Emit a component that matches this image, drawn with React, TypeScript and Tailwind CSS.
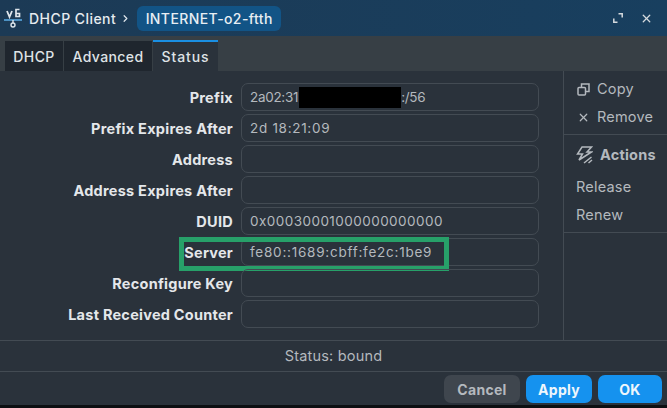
import React from 'react';
import { X, ChevronRight } from 'lucide-react';

const rows = [
  { label: 'Prefix', value: '2a02:31', redacted: true, spacing: 'tracking-[-0.3px]' },
  { label: 'Prefix Expires After', value: '2d 18:21:09', spacing: 'tracking-[0.7px]' },
  { label: 'Address', value: '', spacing: '' },
  { label: 'Address Expires After', value: '', spacing: '' },
  { label: 'DUID', value: '0x00030001000000000000', spacing: 'tracking-[0.45px]' },
  { label: 'Server', value: 'fe80::1689:cbff:fe2c:1be9', highlight: true, spacing: 'tracking-[0.76px]' },
  { label: 'Reconfigure Key', value: '', spacing: '' },
  { label: 'Last Received Counter', value: '', spacing: '' },
];

const tabs = [
  { name: 'DHCP', width: 'w-[58px]' },
  { name: 'Advanced', width: 'w-[88px]' },
  { name: 'Status', width: 'w-[65px]' },
];

const Row = ({ label, value, redacted, highlight, spacing }: { label: string; value: string; redacted?: boolean; highlight?: boolean; spacing: string }) => (
  <div className="flex items-center h-[28px] relative">
    <div className="w-[233px] pt-[1px] text-right text-[14.5px] tracking-[0.25px] font-bold text-[#e4e7ea] whitespace-nowrap">{label}</div>
    <div className={`ml-[8px] w-[298px] h-[28px] pt-[1px] border border-[#434b53] rounded-[7px] pl-[8px] flex items-center text-[13.5px] text-[#b4b9be] whitespace-nowrap ${spacing}`}>
      {value}
      {redacted && (
        <>
          <span className="bg-black w-[102px] h-[21px] ml-[1px]"></span>
          <span>:/56</span>
        </>
      )}
    </div>
    {highlight && (
      <div className="absolute left-[179px] top-[-1px] w-[270px] h-[34px] border-[5px] border-[#27a069]"></div>
    )}
  </div>
);

export default function App() {
  return (
    <div className="w-[667px] h-[408px] flex flex-col bg-[#2a323b] overflow-hidden font-['Inter','Noto_Sans',sans-serif]">
      {/* Title bar */}
      <div className="h-[36px] shrink-0 flex items-center bg-gradient-to-r from-[#1c3a55] to-[#183f5f] pl-[4px] pr-[14px]">
        <svg width="19" height="24" viewBox="0 0 19 24" className="text-[#dfe6ec]" fill="none" stroke="currentColor">
          <path d="M3 5l2.500 6L8 5" strokeWidth="1.8" />
          <path d="M15.500 3.500h-3.500v7h3.500v-3h-3.500" strokeWidth="1.700" />
          <path d="M0 14h18" strokeWidth="1.600" stroke="#5aa7e0" />
          <path d="M9 14v3" strokeWidth="1.400" />
          <circle cx="9" cy="19" r="2" strokeWidth="1.400" />
        </svg>
        <span className="ml-[6px] text-[14px] font-medium tracking-[0.45px] text-[#e6ebef] whitespace-nowrap">DHCP Client</span>
        <ChevronRight size={11} strokeWidth={2.6} className="ml-[4px] text-[#dfe6ec]" />
        <span className="ml-[6px] h-[25px] w-[144px] flex items-center justify-center rounded-[6px] bg-[#125486] text-[14px] font-medium text-[#e8eef3] whitespace-nowrap tracking-[0.4px]">
          INTERNET-o2-ftth
        </span>
        <div className="ml-auto flex items-center gap-[17px] text-[#d5dade]">
          <svg width="10" height="10" viewBox="0 0 10 10" fill="none" stroke="currentColor" strokeWidth="1.5">
            <path d="M5.500.8h3.700v3.700M.8 5.500v3.700h3.700" />
          </svg>
          <X size={13} strokeWidth={2.4} />
        </div>
      </div>

      {/* Tabs */}
      <div className="h-[35px] shrink-0 flex items-end gap-[1px] bg-[#373f45] pl-[5px]">
        {tabs.map((t) => (
          <div
            key={t.name}
            className={
              t.name === 'Status'
                ? `${t.width} h-[31px] flex items-center justify-center border-t-2 border-[#1a8fe3] bg-[#2a323b] text-[14px] tracking-[0.9px] font-medium text-[#dfe3e6]`
                : `${t.width} h-[30px] flex items-center justify-center bg-[#1f262e] text-[14px] tracking-[0.4px] font-medium text-[#dfe3e6]`
            }
          >
            {t.name}
          </div>
        ))}
      </div>

      {/* Body */}
      <div className="h-[270px] shrink-0 flex border-b border-[#434b53]">
        <div className="w-[563px] pt-[12px] flex flex-col gap-[3px]">
          {rows.map((r) => (
            <Row key={r.label} {...r} />
          ))}
        </div>
        <div className="w-[104px] border-l border-[#434b53] text-[14.5px] tracking-[0.2px] text-[#b4b9be]">
          <div className="h-[64px] border-b border-[#434b53] pl-[13px] pt-[4px] flex flex-col">
            <div className="h-[28px] flex items-center gap-[7px]">
              <svg width="13" height="13" viewBox="0 0 13 13" fill="none" stroke="currentColor" strokeWidth="1.5">
                <rect x="1" y="4.500" width="7.500" height="7.500" rx="1" />
                <path d="M4.500 4.500V1h7.500v7.500H8.500" />
              </svg>
              Copy
            </div>
            <div className="h-[28px] flex items-center gap-[7px]">
              <X size={13} strokeWidth={2.2} />
              Remove
            </div>
          </div>
          <div className="h-[98px] border-b border-[#434b53] pl-[12px] flex flex-col">
            <div className="h-[40px] flex items-center gap-[7px] font-bold text-[#b4b9be]">
              <svg width="17" height="19" viewBox="0 0 17 19" fill="none" stroke="currentColor" strokeWidth="1.5">
                <path d="M6 1h9.500l-4.500 5h4.500L3 14l3.500-6H1.500z" />
                <path d="M8 17l7.500-6M12.500 17l3.500-3" />
              </svg>
              Actions
            </div>
            <div className="h-[28px] flex items-center mt-[-2px]">Release</div>
            <div className="h-[28px] flex items-center">Renew</div>
          </div>
        </div>
      </div>

      {/* Status */}
      <div className="h-[31px] shrink-0 flex items-center justify-center border-b border-[#434b53] text-[14.5px] tracking-[0.2px] text-[#b4b9be]">
        Status: bound
      </div>

      {/* Footer */}
      <div className="h-[33px] shrink-0 flex items-center justify-end gap-[6px] pr-[5px] pt-[1px]">
        <button className="w-[76px] h-[28px] rounded-[7px] bg-[#3f464e] text-[14px] tracking-[0.3px] font-bold text-[#b4b9be]">Cancel</button>
        <button className="w-[66px] h-[28px] rounded-[7px] bg-[#1592ef] text-[14px] tracking-[0.3px] font-bold text-[#eef6fc]">Apply</button>
        <button className="w-[64px] h-[28px] rounded-[7px] bg-[#1592ef] text-[14px] tracking-[0.3px] font-bold text-[#eef6fc]">OK</button>
      </div>
      <div className="flex-1 bg-[#0c0f12]"></div>
    </div>
  );
}
